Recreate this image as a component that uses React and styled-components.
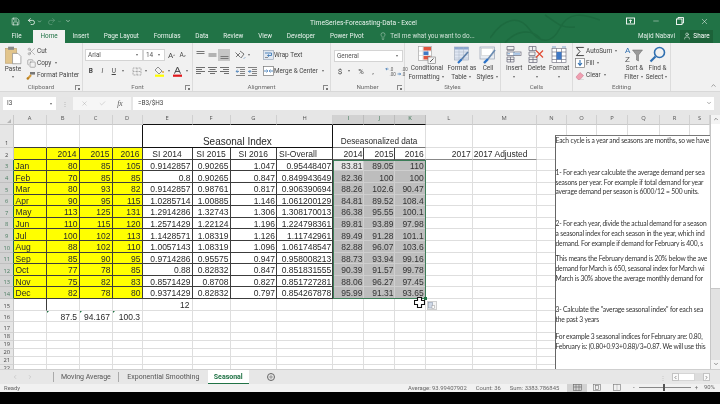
import React from "react";
import styled, { createGlobalStyle } from "styled-components";
import { Save, Undo2, Redo2, Lightbulb, User, X, Minus, Scissors, Copy, Search, Check, ChevronUp, ChevronDown, ChevronLeft, ChevronRight, Plus } from "lucide-react";

const Global = createGlobalStyle`
  html, body { margin: 0; padding: 0; background: #000; }
  * { box-sizing: border-box; }
`;

const Frame = styled.div`
  width: 720px; height: 404px; overflow: hidden; background: #000;
  display: flex; flex-direction: column;
  font-family: Roboto, "Open Sans", sans-serif;
  filter: blur(0.4px);
`;
const BlackBar = styled.div`height: ${p => p.$h}px; flex: none; background: #000;`;

const TitleRow = styled.div`
  height: 17px; flex: none; background: #217346; color: #fff; position: relative;
  display: flex; align-items: center; padding-left: 10px;
`;
const Qat = styled.div`display: flex; align-items: center; width: 280px; gap: 0;`;
const QatBtn = styled.span`
  display: inline-flex; align-items: center; justify-content: center;
  width: ${p => p.$w || 10}px; margin-right: ${p => p.$mr || 0}px; opacity: ${p => p.$dim ? .35 : 1};
`;
const WinTitle = styled.div`
  width: 145px; padding-left: 20px; font-size: 6.7px; white-space: nowrap; color: #e8f2ec; margin-top: 3px;
`;
const WinBtns = styled.div`display: flex; align-items: center; margin-left: auto; padding-right: 3px;`;
const WinBtn = styled.span`
  width: 24.6px; display: inline-flex; justify-content: center; align-items: center;
`;
const Swirl = styled.svg`position: absolute; left: 490px; top: 0; pointer-events: none;`;

const TabRow = styled.div`
  height: 13.4px; flex: none; background: #217346; display: flex; align-items: stretch; color: #fff;
  font-size: 6.4px;
`;
const Tab = styled.div`
  padding: 0 ${p => p.$px ?? 7.4}px; display: flex; align-items: center; white-space: nowrap;
  background: ${p => p.$active ? "#f1f1f1" : "transparent"};
  color: ${p => p.$active ? "#217346" : "#e9f3ed"};
`;
const TellMe = styled.div`display: flex; align-items: center; gap: 3px; padding-left: 8px; color: #cfe2d7; white-space: nowrap;`;
const UserName = styled.div`margin-left: auto; display: flex; align-items: center; white-space: nowrap; color: #e2efe8;`;
const ShareBtn = styled.div`
  background: #1c6239; margin: 0 7px 0 5px; width: 33px; display: flex; align-items: center; justify-content: center; gap: 2px;
`;

const Ribbon = styled.div`
  height: 48.8px; flex: none; background: #f1f1f1; display: flex; color: #454545; font-size: 6.4px;
  border-bottom: 1px solid #d8d8d8; position: relative;
`;
const Group = styled.div`
  width: ${p => p.$w}px; flex: none; display: flex; flex-direction: column;
  border-right: 1px solid #dcdcdc; position: relative;
`;
const GroupBody = styled.div`
  height: 38px; display: flex; padding: ${p => p.$pt ?? 2}px 0 0 ${p => p.$pl ?? 0}px;
  flex-direction: ${p => p.$col ? "column" : "row"}; gap: ${p => p.$gap || 0}px;
`;
const GroupLabel = styled.div`
  flex: 1; display: flex; align-items: center; justify-content: center; color: #6a6a6a; font-size: 6.2px; position: relative; padding-top: 1.5px;
`;
const Launcher = styled.span`
  position: absolute; right: 2px; top: 3.5px; width: 5px; height: 5px;
  border-left: 1px solid #888; border-bottom: 0; border-top: 1px solid #888; 
  &::after { content: ""; position: absolute; right: 0; bottom: 0; width: 2px; height: 2px; background: #777; }
`;
const PasteBtn = styled.div`
  width: 26px; display: flex; flex-direction: column; align-items: center; padding-top: 1px; color: #444; flex: none;
`;
const SmallCol = styled.div`display: flex; flex-direction: column; width: ${p => p.$w || 56}px; flex: none;`;
const SmallRow = styled.div`
  height: 12px; display: flex; align-items: center; gap: 1px; white-space: nowrap;
`;
const SmallIcon = styled.span`width: ${p => p.$w || 10}px; display: inline-flex; justify-content: center; flex: none; align-items: center;`;
const Row = styled.div`display: flex; align-items: center; height: 12px;`;
const Combo = styled.div`
  width: ${p => p.$w}px; height: 12px; background: #fff; border: 1px solid #d4d4d4; flex: none;
  display: flex; align-items: center; justify-content: space-between; padding: 0 2px; color: #555; font-size: 6.4px;
`;
const Caret = styled.span`
  display: inline-block; width: ${p => p.$w || 6}px; flex: none; text-align: center;
  &::before { content: ""; display: inline-block; vertical-align: middle; border: 1.5px solid transparent; border-top: 2px solid #666; border-bottom: 0; }
`;
const Cmd = styled.span`
  width: ${p => p.$w || 12}px; height: 12px; flex: none; display: inline-flex; align-items: center; justify-content: center;
  font-size: ${p => p.$fs || 7}px; color: #444; font-weight: ${p => p.$b ? 700 : 400}; font-style: ${p => p.$i ? "italic" : "normal"};
  text-decoration: ${p => p.$u ? "underline" : "none"};
  background: ${p => p.$on ? "#c6c6c6" : "transparent"};
`;
const Spacer = styled.span`width: ${p => p.$w}px; flex: none; display: inline-block;`;
const BigBtn = styled.div`
  width: ${p => p.$w}px; flex: none; display: flex; flex-direction: column; align-items: center; white-space: nowrap;
`;
const BigIcon = styled.div`height: 20px; display: flex; align-items: center; justify-content: center;`;
const BigLine = styled.div`height: 8.3px; line-height: 8.3px; display: flex; align-items: center;`;
const Collapse = styled.span`position: absolute; right: 3px; bottom: 2px; color: #555; display: flex;`;

const FormulaBar = styled.div`
  height: 23px; flex: none; background: #e6e6e6; display: flex; align-items: center; padding: 0 6px 0 3px; font-size: 6.4px; color: #444;
`;
const NameBox = styled.div`
  width: 53px; height: 13px; background: #fff; display: flex; align-items: center; justify-content: space-between; padding: 0 2px 0 4px; flex: none;
`;
const Grip = styled.span`width: 17px; text-align: center; color: #aaa; font-size: 6px; flex: none;`;
const FxBox = styled.div`
  width: 58px; height: 13px; background: #f6f6f6; display: flex; align-items: center; justify-content: space-around; padding: 0 3px; margin-right: 2px; flex: none; color: #999;
`;
const Fx = styled.span`font-family: "Liberation Serif", serif; font-style: italic; color: #555; font-size: 7.5px;`;
const FormulaInput = styled.div`
  flex: 1; height: 13px; background: #fff; display: flex; align-items: center; justify-content: space-between; padding: 0 2px 0 5px;
`;

const SheetWrap = styled.div`height: 254px; flex: none; display: flex; position: relative; background: #fff; overflow: hidden;`;
const Sheet = styled.div`
  width: 710px; flex: none; display: grid; overflow: hidden;
  grid-template-columns: 13.5px 33px 33px 33px 30px 50px 38px 46.5px 56.3px 31.2px 31px 30.2px 47px 64px 30.3px 30px 31px 32px 30px 20px;
  grid-template-rows: 9.7px 23px 12.3px repeat(12, 11.6px) 11.7px 11.6px 10.7px repeat(5, 8px);
  font-family: "Liberation Sans", Arial, sans-serif; font-size: 8.5px; color: #2a2a2a;
`;
const Corner = styled.div`background: #e6e6e6; border-right: 1px solid #c8c8c8; border-bottom: 1px solid #c8c8c8; position: relative;
  &::after { content: ""; position: absolute; right: 2px; bottom: 1px; border: 2px solid transparent; border-right-color: #b5b5b5; border-bottom-color: #b5b5b5; }
`;
const ColHead = styled.div`
  background: ${p => p.$sel ? "#d2d2d2" : "#e6e6e6"};
  border-right: 1px solid ${p => p.$sel ? "#bcbcbc" : "#d0d0d0"};
  border-bottom: 1px solid ${p => p.$line};
  font-family: "Open Sans", sans-serif; font-size: 5.8px; color: ${p => p.$sel ? "#2f6e4a" : "#555"};
  display: flex; align-items: center; justify-content: center; line-height: 1;
`;
const RowHead = styled.div`
  background: ${p => p.$sel ? "#d2d2d2" : "#e6e6e6"};
  border-right: 1px solid ${p => p.$sel ? "#217346" : "#c8c8c8"};
  border-bottom: 1px solid ${p => p.$sel ? "#bfbfbf" : "#d2d2d2"};
  font-family: "Open Sans", sans-serif; font-size: 5.8px; color: ${p => p.$sel ? "#4c7d62" : "#444"};
  display: flex; align-items: flex-end; justify-content: center; line-height: 8px; padding-left: 1px;
`;
const Cell = styled.div`
  grid-column: span ${p => p.$span || 1};
  background: ${p => p.$bg || "#fff"};
  border-right: 1px solid ${p => p.$r || "#dedede"};
  border-bottom: 1px solid ${p => p.$b || "#dedede"};
  display: flex; align-items: flex-end; white-space: nowrap; line-height: 8.5px;
  justify-content: ${p => p.$j || "flex-end"};
  padding: 0 ${p => p.$pr ?? 1}px 0 ${p => p.$pl ?? 1}px;
  font-size: ${p => p.$fs || 8.5}px; color: ${p => p.$c || "#2a2a2a"};
  position: relative; min-width: 0;
`;
const Tick = styled.span`
  position: absolute; left: 0; top: 0; border: 1.3px solid transparent; border-left-color: #217346; border-top-color: #217346;
`;
const Selection = styled.div`
  position: absolute; left: 333px; top: 45px; width: 93px; height: 139.4px; border: 1px solid #3c7d58; pointer-events: none;
  &::after { content: ""; position: absolute; right: -2px; bottom: -2px; width: 3px; height: 3px; background: #217346; }
`;
const CursorMark = styled.svg`position: absolute; left: 414px; top: 182px;`;
const PasteOpts = styled.div`
  position: absolute; left: 426.5px; top: 186px; width: 10px; height: 9.5px; background: #f4f4f4; border: 1px solid #cfcfcf;
  display: flex; align-items: center; justify-content: center;
`;
const TextBox = styled.div`
  position: absolute; left: 554.5px; top: 20px; right: 10px; bottom: 0; background: #fff;
  border-left: 1px solid #666; border-top: 1px solid #777; overflow: hidden;
  font-family: Lato, "Open Sans", sans-serif; font-size: 6.7px; letter-spacing: -0.18px; color: #333; line-height: 9.7px; padding-top: 0.5px;
`;
const Para = styled.div`margin-top: ${p => p.$mt || 0}px;`;
const Line = styled.div`white-space: nowrap;`;
const VScroll = styled.div`
  width: 10px; flex: none; background: #e2e2e2; border-left: 1px solid #c6c6c6; display: flex; flex-direction: column;
`;
const VArrow = styled.div`height: 9px; flex: none; display: flex; align-items: center; justify-content: center; background: #f4f4f4; color: #555;`;
const VThumb = styled.div`height: 165px; background: #fff; border-bottom: 1px solid #c8c8c8; flex: none;`;
const VTrack = styled.div`flex: 1;`;

const SheetTabs = styled.div`
  height: 15.5px; flex: none; background: #e7e7e7; display: flex; align-items: stretch; font-size: 7px; color: #555;
  border-top: 1px solid #cfcfcf;
`;
const NavArrows = styled.div`width: 53px; display: flex; align-items: center; padding-left: 12px; gap: 9px; color: #b2b2b2; flex: none;`;
const STab = styled.div`
  display: flex; align-items: center; white-space: nowrap; padding: 0 ${p => p.$px || 8}px;
  ${p => p.$active ? `background:#fff; color:#217346; font-weight:700; border-bottom:1.5px solid #217346;` : `position:relative;`}
  ${p => p.$sep ? `border-left: 1px solid #aaa; margin: 2.5px 0;` : ""}
`;
const AddSheet = styled.div`
  width: 8px; height: 8px; border-radius: 50%; border: 1px solid #666; margin: 3px 0 0 18px; display: flex; align-items: center; justify-content: center;
`;
const HScroll = styled.div`margin-left: auto; display: flex; align-items: center; padding-right: 10.5px; color: #555;`;
const HDots = styled.span`color: #bbb; margin-right: 6px; font-size: 6px;`;
const HBtn = styled.span`width: 7px; height: 8px; background: #fafafa; border: 1px solid #c3c3c3; display: inline-flex; align-items: center; justify-content: center;`;
const HThumb = styled.span`width: 16px; height: 8px; background: #fff; border: 1px solid #d5d5d5; border-left: 0;`;
const HTrack = styled.span`width: 8px; height: 8px; background: #dcdcdc;`;

const StatusBar = styled.div`
  height: 7.5px; flex: none; background: #f1f1f1; overflow: hidden; display: flex; align-items: flex-start; font-size: 5.9px; color: #666; line-height: 9px;
  padding-left: 4px;
`;
const StatusReady = styled.span`width: 15px; flex: none;`;
const StatusStats = styled.div`margin-left: 389px; display: flex; gap: 9px; white-space: nowrap; width: 155px; flex: none;`;
const ViewBtn = styled.span`width: 20px; height: 8px; flex: none; display: inline-flex; justify-content: center; background: ${p => p.$on ? "#d2d2d2" : "transparent"};`;
const Zoomer = styled.div`display: flex; align-items: center; height: 7px; margin-left: 6px; gap: 3px; flex: none;`;
const ZoomTrack = styled.span`width: 52px; height: 1px; background: #888; position: relative; margin: 0 1px; display: block;
  &::after { content: ""; position: absolute; left: 24px; top: -3px; width: 2px; height: 7px; background: #555; }
`;
const ZoomValue = styled.span`margin-left: 3px;`;
const NoWrap = styled.span`white-space: nowrap;`;
const Sup = styled.sup`font-size: 4px;`;

/* ---------- drawings ---------- */
const Lines = ({ kind, y = 2 }) => {
  const w = { l: [9, 6, 9, 5], c: [9, 6, 9, 5], r: [9, 6, 9, 5] }[kind];
  return (
    <svg width="11" height="9" viewBox="0 0 11 9">
      {w.map((v, i) => {
        const x = kind === "l" ? 1 : kind === "r" ? 10 - v : (11 - v) / 2;
        return <rect key={i} x={x} y={y - 2 + i * 2} width={v} height="1" fill="#6f6f6f" />;
      })}
    </svg>
  );
};
const VLines = ({ pos }) => {
  const y0 = pos === "t" ? 0 : pos === "m" ? 2.5 : 5;
  return (
    <svg width="11" height="9" viewBox="0 0 11 9">
      {[0, 2].map(i => <rect key={i} x="1.5" y={y0 + i} width="8" height="1" fill="#777" />)}
    </svg>
  );
};
const PasteIcon = () => (
  <svg width="17" height="19" viewBox="0 0 17 19">
    <rect x="0.5" y="2.5" width="11" height="15" fill="#e2c58c" stroke="#b99a62" strokeWidth=".6" />
    <rect x="3" y="0.7" width="6" height="3.2" fill="#8a8a8a" />
    <path d="M7.5 7.5h5.5l3 3v7.5H7.5z" fill="#fff" stroke="#8a8a8a" strokeWidth=".7" />
  </svg>
);
const PainterIcon = () => (
  <svg width="10" height="9" viewBox="0 0 10 9">
    <rect x="4" y="1" width="5" height="2.6" fill="#777" />
    <path d="M5 4L2 7.5" stroke="#d39a3a" strokeWidth="2" />
    <circle cx="1.8" cy="7.5" r="1.2" fill="#b77d1c" />
  </svg>
);
const BorderIcon = () => (
  <svg width="10" height="9" viewBox="0 0 10 9" fill="none" stroke="#9a9a9a" strokeWidth=".8" strokeDasharray="1 .5">
    <rect x="1" y="1" width="8" height="7" /><path d="M5 1v7M1 4.5h8" />
  </svg>
);
const BucketIcon = () => (
  <svg width="11" height="11" viewBox="0 0 11 11">
    <path d="M4 1l4 4-3 3-4-4z" fill="#f3f3f3" stroke="#666" strokeWidth=".7" />
    <circle cx="9" cy="6" r="1" fill="#e9a63a" />
    <rect x="1" y="8.6" width="9" height="2.2" fill="#ffff00" />
  </svg>
);
const FontColorIcon = () => (
  <svg width="11" height="11" viewBox="0 0 11 11">
    <path d="M2.5 7.6L5.5 1l3 6.6M3.8 5.4h3.4" fill="none" stroke="#444" strokeWidth="1" />
    <rect x="1" y="8.6" width="9" height="2.2" fill="#e0181c" />
  </svg>
);
const OrientIcon = () => (
  <svg width="12" height="10" viewBox="0 0 12 10" fill="none" stroke="#666" strokeWidth=".9">
    <path d="M1.5 2.5l5 5M2 7l4-4M6 1l4 3-3 4" /><path d="M10 8.5l1-1" stroke="#2f6fb0" />
  </svg>
);
const WrapIcon = () => (
  <svg width="11" height="10" viewBox="0 0 11 10">
    <rect x=".5" y=".5" width="10" height="9" fill="#dfe7f1" stroke="#8a9bb0" strokeWidth=".6" />
    <path d="M2 3h6.5v2.5H5M6 4.5L4.5 5.5 6 6.7" fill="none" stroke="#2f6fb0" strokeWidth=".8" />
    <rect x="2" y="7.2" width="3" height=".8" fill="#777" />
  </svg>
);
const MergeIcon = () => (
  <svg width="11" height="10" viewBox="0 0 11 10">
    <rect x=".5" y=".5" width="10" height="9" fill="#fff" stroke="#777" strokeWidth=".7" />
    <path d="M1 5h3M10 5H7" stroke="#2f6fb0" strokeWidth=".8" /><path d="M3.5 3.5L5 5 3.5 6.500M7.500 3.500L6 5l1.500 1.500" fill="none" stroke="#2f6fb0" strokeWidth=".7" />
  </svg>
);
const IndentIcon = ({ flip }) => (
  <svg width="11" height="9" viewBox="0 0 11 9">
    {[0, 2, 4, 6, 8].map(y => <rect key={y} x={y > 1 && y < 7 ? 5 : 1} y={y} width={y > 1 && y < 7 ? 5 : 9} height=".9" fill="#777" />)}
    <path d={flip ? "M1 4.400h2.600M2.500 3l1.400 1.400L2.500 5.800" : "M4 4.400H1.400M2.500 3L1.100 4.400 2.500 5.800"} fill="none" stroke="#2f6fb0" strokeWidth=".8" />
  </svg>
);
const DecIcon = ({ top, bottom, arrowRight }) => (
  <svg width="12" height="11" viewBox="0 0 12 11">
    <text x="4.500" y="4.500" fontSize="4.500" fill="#555" fontFamily="Liberation Sans">{top}</text>
    <text x="4.500" y="10" fontSize="4.500" fill="#555" fontFamily="Liberation Sans">{bottom}</text>
    <path d={arrowRight ? "M0.500 8h3M2.500 6.800l1.200 1.200-1.200 1.200" : "M3.500 3H.8M2 1.800L.8 3 2 4.200"} fill="none" stroke="#2f6fb0" strokeWidth=".7" />
  </svg>
);
const CondIcon = () => (
  <svg width="18" height="18" viewBox="0 0 18 18">
    <rect x=".5" y=".5" width="13" height="14" fill="#fff" stroke="#9a9a9a" strokeWidth=".6" />
    <path d="M5 .5v14M9.500 .5v14M.5 5h13M.5 9.500h13" stroke="#bdbdbd" strokeWidth=".5" />
    <rect x="5.500" y="1" width="7.500" height="3.500" fill="#e0543f" />
    <rect x="5.500" y="5.500" width="5" height="3.500" fill="#3f79c6" />
    <rect x="5.500" y="10" width="7" height="3.500" fill="#e0543f" />
    <rect x="10" y="11" width="7.500" height="6.500" fill="#f4f4f4" stroke="#777" strokeWidth=".6" />
    <path d="M12 16l3.500-3.500" stroke="#555" />
  </svg>
);
const TableIcon = () => (
  <svg width="18" height="18" viewBox="0 0 18 18">
    <rect x="1.500" y="1" width="14" height="13" fill="#dfe6f2" stroke="#9aa5b5" strokeWidth=".6" />
    <rect x="1.500" y="1" width="14" height="2.500" fill="#8ea7cf" />
    <path d="M6 1v13M10.500 1v13M1.500 6h14M1.500 9h14M1.500 12h14" stroke="#a9b4c6" strokeWidth=".5" />
    <path d="M8 14l7-8" stroke="#5b7ea8" strokeWidth="1.600" /><path d="M5 17l3.500-3.500" stroke="#2c72c7" strokeWidth="2.200" />
  </svg>
);
const StylesIcon = () => (
  <svg width="18" height="18" viewBox="0 0 18 18">
    <rect x="1" y="1" width="14.500" height="12" fill="#e9edf3" stroke="#98a3b4" strokeWidth=".7" />
    <rect x="2.500" y="2.500" width="11.500" height="7" fill="#fff" stroke="#bbb" strokeWidth=".4" />
    <path d="M9 13l7-9" stroke="#6a8bb2" strokeWidth="1.700" /><path d="M5 17l4-4" stroke="#2c72c7" strokeWidth="2.400" />
  </svg>
);
const InsertIcon = () => (
  <svg width="16" height="17" viewBox="0 0 16 17" fill="none" stroke="#667" strokeWidth=".7">
    <path d="M1 .5h7v3.500H1zM1 4h7M1 11h7v5H1zM4.500 11v5M1 13.500h7" />
    <rect x="1" y="6" width="14" height="3.600" fill="#fff" />
    <path d="M8 6v3.600M4 7.800H1.500" stroke="#2f6fb0" />
    <rect x="9" y="6.700" width="5" height="2.200" fill="#a7c4e6" stroke="none" />
  </svg>
);
const DeleteIcon = () => (
  <svg width="17" height="17" viewBox="0 0 17 17" fill="none" stroke="#667" strokeWidth=".7">
    <path d="M1 .5h7v4H1zM4.500 .5v4M1 11h8v5.500H1zM5 11v5.500M1 13.500h8M1 6h6v3.500H1z" />
    <path d="M8 4.500l7 7M15 4.500l-7 7" stroke="#e04b33" strokeWidth="1.200" />
  </svg>
);
const FormatIcon = () => (
  <svg width="16" height="17" viewBox="0 0 16 17" fill="none" stroke="#667" strokeWidth=".6">
    <rect x="1" y="2.500" width="14" height="14" fill="#fff" />
    <path d="M1 6h14M1 10h14M1 13.500h14M5.500 2.500v14M10.500 2.500v14" />
    <rect x="5.500" y="6" width="5" height="7.500" fill="#3f79c6" stroke="none" />
    <path d="M1 1h4M11 1h4" stroke="#2f6fb0" />
  </svg>
);
const SigmaIcon = () => (
  <svg width="11" height="11" viewBox="0 0 11 11"><path d="M9.500 1.500V1h-8l4 4.500-4 4.500h8V9.400" fill="none" stroke="#444" strokeWidth="1.100" /></svg>
);
const FillIcon = () => (
  <svg width="10" height="10" viewBox="0 0 10 10">
    <rect x=".5" y=".5" width="9" height="9" fill="#fff" stroke="#777" strokeWidth=".7" />
    <path d="M5 2v5M3 5l2 2.300L7 5" fill="none" stroke="#2f6fb0" strokeWidth="1.100" />
  </svg>
);
const EraserIcon = () => (
  <svg width="10" height="9" viewBox="0 0 10 9">
    <path d="M1 6l4-4.500 3.500 3L5 8.500H3z" fill="#ef9fb0" stroke="#c8708a" strokeWidth=".5" />
    <path d="M4 8.700h5" stroke="#bbb" strokeWidth=".5" />
  </svg>
);
const SortIcon = () => (
  <svg width="19" height="18" viewBox="0 0 19 18">
    <text x="0" y="7" fontSize="8" fill="#2f6fb0" fontFamily="Liberation Sans">A</text>
    <text x="0" y="16" fontSize="8" fill="#555" fontFamily="Liberation Sans">Z</text>
    <path d="M7.500 4h10l-4 5v6l-2-1V9z" fill="#9a9a9a" stroke="#666" strokeWidth=".5" />
  </svg>
);
const CopyMini = () => <Copy size={9} color="#777" strokeWidth={1.4} />;

/* ---------- sheet data ---------- */
const cols = "ABCDEFGHIJKLMNOPQRS".split("");
const months = ["Jan","Feb","Mar","Apr","May","Jun","Jul","Aug","Sep","Oct","Nov","Dec"];
const demand = [[80,85,105],[70,85,85],[80,93,82],[90,95,115],[113,125,131],[110,115,120],[100,102,113],[88,102,110],[85,90,95],[77,78,85],[75,82,83],[82,78,80]];
const si = [
  ["0.9142857","0.90265","1.047","0.95448407"],["0.8","0.90265","0.847","0.849943649"],["0.9142857","0.98761","0.817","0.906390694"],
  ["1.0285714","1.00885","1.146","1.061200129"],["1.2914286","1.32743","1.306","1.308170013"],["1.2571429","1.22124","1.196","1.224798361"],
  ["1.1428571","1.08319","1.126","1.11742961"],["1.0057143","1.08319","1.096","1.061748547"],["0.9714286","0.95575","0.947","0.958008213"],
  ["0.88","0.82832","0.847","0.851831555"],["0.8571429","0.8708","0.827","0.851727281"],["0.9371429","0.82832","0.797","0.854267878"],
];
const des = [
  ["83.81","89.05","110"],["82.36","100","100"],["88.26","102.6","90.47"],["84.81","89.52","108.4"],["86.38","95.55","100.1"],["89.81","93.89","97.98"],
  ["89.49","91.28","101.1"],["82.88","96.07","103.6"],["88.73","93.94","99.16"],["90.39","91.57","99.78"],["88.06","96.27","97.45"],["95.99","91.31","93.65"],
];
const DARK = "#3c3c3c";
const YEL = "#ffff00";
const SEL = "#bdbdbd";

function cellsForRow(r) {
  const out = [];
  const push = (c, props = {}, text = "") => out.push(<Cell key={r + c} {...props}>{text}</Cell>);
  if (r === 1) {
    ["A","B","C"].forEach(c => push(c, { $b: DARK, $r: "#e2e2e2" }));
    push("D", { $b: DARK, $r: "#111" });
    push("E", { $span: 4, $fs: 10, $j: "center", $r: "#111", $b: "#111" }, "Seasonal Index");
    push("I", { $span: 3, $fs: 8.2, $j: "center", $b: "#777" }, "Deseasonalized data");
    cols.slice(11).forEach(c => push(c));
  } else if (r === 2) {
    push("A", { $bg: YEL, $r: DARK, $b: DARK });
    ["2014","2015","2016"].forEach((t, i) => push("BCD"[i], { $bg: YEL, $r: DARK, $b: DARK, $pr: 2 }, t));
    ["SI 2014","SI 2015","SI 2016"].forEach((t, i) => push("EFG"[i], { $j: "center", $r: DARK, $b: DARK }, t));
    push("H", { $j: "flex-start", $r: DARK, $b: DARK, $pl: 2 }, "SI-Overall");
    ["2014","2015","2016"].forEach((t, i) => push("IJK"[i], { $r: i < 2 ? DARK : "#dedede", $b: "#666" }, t));
    push("L", { $b: "#888" }, "2017");
    push("M", { $j: "flex-start", $b: "#888" }, "2017 Adjusted");
    cols.slice(13).forEach(c => push(c));
  } else if (r >= 3 && r <= 14) {
    const i = r - 3;
    push("A", { $bg: YEL, $r: DARK, $b: DARK, $j: "flex-start", $pl: 2 }, months[i]);
    demand[i].forEach((v, k) => push("BCD"[k], { $bg: YEL, $r: DARK, $b: DARK }, v));
    si[i].forEach((v, k) => push("EFGH"[k], { $r: DARK, $b: DARK }, v));
    des[i].forEach((v, k) => push("IJK"[k], {
      $bg: r === 3 && k === 0 ? "#e6e6e6" : SEL, $r: "#cfcfcf", $b: "#cfcfcf", $c: "#333",
    }, v));
    cols.slice(11).forEach(c => push(c));
  } else if (r === 15) {
    push("A", { $r: DARK });
    cols.slice(1).forEach(c => c === "E" ? push(c, { $pr: 2 }, "12") : push(c));
  } else if (r === 16) {
    push("A");
    const vals = { B: "87.5", C: "94.167", D: "100.3" };
    cols.slice(1).forEach(c => vals[c]
      ? out.push(<Cell key={r + c} $pr={1.5}><Tick />{vals[c]}</Cell>)
      : push(c));
  } else {
    cols.forEach(c => push(c));
  }
  return out;
}

const rows = Array.from({ length: 22 }, (_, i) => i + 1);

export default function App() {
  return (
    <Frame>
      <Global />
      <BlackBar $h={12.7} />
      <TitleRow>
        <Qat>
          <QatBtn $mr={6}><Save size={9} strokeWidth={1.5} /></QatBtn>
          <QatBtn $mr={0}><Undo2 size={9} strokeWidth={2} /></QatBtn>
          <QatBtn $w={6} $mr={4}><ChevronDown size={5} strokeWidth={2} /></QatBtn>
          <QatBtn $dim $mr={0}><Redo2 size={9} strokeWidth={1.6} /></QatBtn>
          <QatBtn $dim $w={6} $mr={2}><ChevronDown size={5} strokeWidth={2} /></QatBtn>
          <QatBtn $w={8}><ChevronDown size={6} strokeWidth={2} /></QatBtn>
        </Qat>
        <WinTitle>TimeSeries-Forecasting-Data - Excel</WinTitle>
        <Swirl width="110" height="30" viewBox="0 0 110 30" fill="none" stroke="#1d6a3f" strokeWidth="1.500">
          <path d="M0 25c15-22 30-22 40-8s22 14 30-2 22-15 40-8M15 30c10-12 25-15 35-5M55 2c10 6 15 14 30 12" />
        </Swirl>
        <WinBtns>
          <WinBtn>
            <svg width="9" height="8" viewBox="0 0 9 8" fill="none" stroke="#fff" strokeWidth=".9"><rect x=".5" y="1" width="8" height="6" /><path d="M4.500 6V3M3.200 4l1.300-1.300L5.800 4" /></svg>
          </WinBtn>
          <WinBtn><Minus size={8} strokeWidth={1.3} /></WinBtn>
          <WinBtn>
            <svg width="8" height="8" viewBox="0 0 8 8" fill="none" stroke="#fff" strokeWidth=".9"><rect x=".5" y="2" width="5.500" height="5.500" /><path d="M2 2V.5h5.500V6H6" /></svg>
          </WinBtn>
          <WinBtn><X size={9} strokeWidth={1.3} /></WinBtn>
        </WinBtns>
      </TitleRow>
      <TabRow>
        <Tab $px={11.5}>File</Tab>
        <Tab $active $px={7.5}>Home</Tab>
        <Tab>Insert</Tab>
        <Tab>Page Layout</Tab>
        <Tab>Formulas</Tab>
        <Tab>Data</Tab>
        <Tab>Review</Tab>
        <Tab>View</Tab>
        <Tab>Developer</Tab>
        <Tab>Power Pivot</Tab>
        <TellMe><Lightbulb size={8} strokeWidth={1.4} />Tell me what you want to do...</TellMe>
        <UserName>Majid Nabavi</UserName>
        <ShareBtn><User size={8} strokeWidth={1.6} />Share</ShareBtn>
      </TabRow>
      <Ribbon>
        <Group $w={83}>
          <GroupBody $pl={0}>
            <PasteBtn>
              <PasteIcon />
              <BigLine>Paste</BigLine>
              <Caret />
            </PasteBtn>
            <SmallCol>
              <SmallRow><SmallIcon><Scissors size={9} color="#777" strokeWidth={1.3} /></SmallIcon>Cut</SmallRow>
              <SmallRow><SmallIcon><CopyMini /></SmallIcon>Copy<Caret $w={8} /></SmallRow>
              <SmallRow><SmallIcon><PainterIcon /></SmallIcon>Format Painter</SmallRow>
            </SmallCol>
          </GroupBody>
          <GroupLabel>Clipboard<Launcher /></GroupLabel>
        </Group>
        <Group $w={110}>
          <GroupBody $col $pt={6} $pl={2} $gap={4}>
            <Row>
              <Combo $w={58}>Arial<Caret /></Combo>
              <Combo $w={22}>14<Caret /></Combo>
              <Spacer $w={1} />
              <Cmd $w={11} $fs={8}>A<Sup>^</Sup></Cmd>
              <Cmd $w={11} $fs={6.5}>A<Sup>v</Sup></Cmd>
            </Row>
            <Row>
              <Cmd $w={11.5} $b $fs={6.5}>B</Cmd>
              <Cmd $w={11.5} $i $fs={6.5}>I</Cmd>
              <Cmd $w={11.5} $u $fs={6.5}>U</Cmd>
              <Caret />
              <Spacer $w={5} />
              <Cmd><BorderIcon /></Cmd>
              <Caret />
              <Spacer $w={5} />
              <Cmd><BucketIcon /></Cmd>
              <Caret />
              <Cmd><FontColorIcon /></Cmd>
              <Caret />
            </Row>
          </GroupBody>
          <GroupLabel>Font<Launcher /></GroupLabel>
        </Group>
        <Group $w={138}>
          <GroupBody $col $pt={6} $pl={1} $gap={4}>
            <Row>
              <Cmd><VLines pos="t" /></Cmd>
              <Cmd><VLines pos="m" /></Cmd>
              <Cmd $on><VLines pos="b" /></Cmd>
              <Spacer $w={4} />
              <Cmd><OrientIcon /></Cmd>
              <Caret />
              <Spacer $w={10} />
              <Cmd><WrapIcon /></Cmd>
              <span>Wrap Text</span>
            </Row>
            <Row>
              <Cmd><Lines kind="l" /></Cmd>
              <Cmd><Lines kind="c" /></Cmd>
              <Cmd><Lines kind="r" /></Cmd>
              <Spacer $w={4} />
              <Cmd><IndentIcon /></Cmd>
              <Cmd><IndentIcon flip /></Cmd>
              <Spacer $w={4} />
              <Cmd><MergeIcon /></Cmd>
              <NoWrap>Merge &amp; Center</NoWrap>
              <Caret $w={10} />
            </Row>
          </GroupBody>
          <GroupLabel>Alignment<Launcher /></GroupLabel>
        </Group>
        <Group $w={74}>
          <GroupBody $col $pt={6.5} $pl={3} $gap={3.5}>
            <Row><Combo $w={69}>General<Caret /></Combo></Row>
            <Row>
              <Cmd $fs={8}>$</Cmd>
              <Caret />
              <Spacer $w={3} />
              <Cmd $fs={7.5}>%</Cmd>
              <Cmd $fs={8}>,</Cmd>
              <Spacer $w={6} />
              <Cmd><DecIcon top=".0" bottom=".00" /></Cmd>
              <Cmd><DecIcon top=".00" bottom=".0" arrowRight /></Cmd>
            </Row>
          </GroupBody>
          <GroupLabel>Number<Launcher /></GroupLabel>
        </Group>
        <Group $w={96}>
          <GroupBody>
            <BigBtn $w={44}>
              <BigIcon><CondIcon /></BigIcon>
              <BigLine>Conditional</BigLine>
              <BigLine>Formatting<Caret /></BigLine>
            </BigBtn>
            <BigBtn $w={26}>
              <BigIcon><TableIcon /></BigIcon>
              <BigLine>Format as</BigLine>
              <BigLine>Table<Caret /></BigLine>
            </BigBtn>
            <BigBtn $w={26}>
              <BigIcon><StylesIcon /></BigIcon>
              <BigLine>Cell</BigLine>
              <BigLine>Styles<Caret /></BigLine>
            </BigBtn>
          </GroupBody>
          <GroupLabel>Styles</GroupLabel>
        </Group>
        <Group $w={72}>
          <GroupBody $pl={2}>
            <BigBtn $w={22.5}>
              <BigIcon><InsertIcon /></BigIcon>
              <BigLine>Insert</BigLine>
              <BigLine><Caret /></BigLine>
            </BigBtn>
            <BigBtn $w={22.5}>
              <BigIcon><DeleteIcon /></BigIcon>
              <BigLine>Delete</BigLine>
              <BigLine><Caret /></BigLine>
            </BigBtn>
            <BigBtn $w={22.5}>
              <BigIcon><FormatIcon /></BigIcon>
              <BigLine>Format</BigLine>
              <BigLine><Caret /></BigLine>
            </BigBtn>
          </GroupBody>
          <GroupLabel>Cells</GroupLabel>
        </Group>
        <Group $w={98}>
          <GroupBody $pl={2}>
            <SmallCol $w={48}>
              <SmallRow><SmallIcon><SigmaIcon /></SmallIcon>AutoSum<Caret /></SmallRow>
              <SmallRow><SmallIcon><FillIcon /></SmallIcon>Fill<Caret /></SmallRow>
              <SmallRow><SmallIcon><EraserIcon /></SmallIcon>Clear<Caret /></SmallRow>
            </SmallCol>
            <BigBtn $w={23}>
              <BigIcon><SortIcon /></BigIcon>
              <BigLine>Sort &amp;</BigLine>
              <BigLine>Filter<Caret /></BigLine>
            </BigBtn>
            <BigBtn $w={23}>
              <BigIcon>
                <svg width="17" height="17" viewBox="0 0 17 17" fill="none" stroke="#2f6fb0" strokeWidth="1.6"><circle cx="10.500" cy="6.500" r="5" /><path d="M6.500 10.500L1.500 15.500" strokeWidth="2.200" /></svg>
              </BigIcon>
              <BigLine>Find &amp;</BigLine>
              <BigLine>Select<Caret /></BigLine>
            </BigBtn>
          </GroupBody>
          <GroupLabel>Editing</GroupLabel>
        </Group>
        <Collapse><ChevronUp size={7} strokeWidth={1.8} /></Collapse>
      </Ribbon>
      <FormulaBar>
        <NameBox>I3<Caret /></NameBox>
        <Grip>⋮</Grip>
        <FxBox><X size={7} strokeWidth={1.2} /><Check size={7} strokeWidth={1.2} /><Fx>fx</Fx></FxBox>
        <FormulaInput>=B3/$H3<ChevronDown size={6} strokeWidth={1.8} /></FormulaInput>
      </FormulaBar>
      <SheetWrap>
        <Sheet>
          <Corner />
          {cols.map((c, i) => (
            <ColHead key={c} $sel={i >= 8 && i <= 10} $line={i >= 4 && i <= 10 ? "#111" : "#c8c8c8"}>{c}</ColHead>
          ))}
          {rows.map(r => (
            <React.Fragment key={r}>
              <RowHead $sel={r >= 3 && r <= 14}>{r}</RowHead>
              {cellsForRow(r)}
            </React.Fragment>
          ))}
        </Sheet>
        <VScroll>
          <VArrow><ChevronUp size={6} strokeWidth={2.5} /></VArrow>
          <VThumb />
          <VTrack />
          <VArrow><ChevronDown size={6} strokeWidth={2.5} /></VArrow>
        </VScroll>
        <Selection />
        <CursorMark width="11" height="11" viewBox="0 0 11 11">
          <path d="M3.500 .5h4v3h3v4h-3v3h-4v-3h-3v-4h3z" fill="#fff" stroke="#111" strokeWidth="1.100" />
        </CursorMark>
        <PasteOpts>
          <svg width="7" height="7" viewBox="0 0 7 7"><rect x=".5" y=".5" width="4" height="5.500" fill="#cfd8e6" stroke="#7e8ea6" strokeWidth=".5" /><rect x="4" y="3.500" width="2.500" height="3" fill="#fff" stroke="#999" strokeWidth=".5" /></svg>
        </PasteOpts>
        <TextBox>
          <Para $mt={0}><Line>Each cycle is a year and seasons are months, so we have</Line></Para>
          <Para $mt={22}>
            <Line>1- For each year calculate the average demand per sea</Line>
            <Line>seasons per year. For example if total demand for year</Line>
            <Line>average demand per season is 6000/12 = 500 units.</Line>
          </Para>
          <Para $mt={22}>
            <Line>2- For each year, divide the actual demand for a season</Line>
            <Line>a seasonal index for each season in the year, which ind</Line>
            <Line>demand. For example if demand for February is 400, s</Line>
          </Para>
          <Para $mt={6}>
            <Line>This means the February demand is 20% below the ave</Line>
            <Line>demand for March is 650, seasonal index for March wi</Line>
            <Line>March is 30% above the average monthly demand for</Line>
          </Para>
          <Para $mt={22}>
            <Line>3- Calculate the "average seasonal index" for each sea</Line>
            <Line>the past 3 years</Line>
          </Para>
          <Para $mt={7}>
            <Line>For example 3 seasonal indices for February are: 0.80,</Line>
            <Line>February is: (0.80+0.93+0.88)/3=0.87.  We will use this</Line>
          </Para>
        </TextBox>
      </SheetWrap>
      <SheetTabs>
        <NavArrows><ChevronLeft size={6} strokeWidth={2} /><ChevronRight size={6} strokeWidth={2} /></NavArrows>
        <STab $sep $px={7}>Moving Average</STab>
        <STab $sep $px={8.5}>Exponential Smoothing</STab>
        <STab $active $px={6}>Seasonal</STab>
        <AddSheet><Plus size={6} strokeWidth={2} color="#555" /></AddSheet>
        <HScroll>
          <HDots>⋮</HDots>
          <HBtn><ChevronLeft size={5} strokeWidth={3} /></HBtn>
          <HThumb />
          <HTrack />
          <HBtn><ChevronRight size={5} strokeWidth={3} /></HBtn>
        </HScroll>
      </SheetTabs>
      <StatusBar>
        <StatusReady>Ready</StatusReady>
        <StatusStats>
          <span>Average: 93.99407902</span>
          <span>Count: 36</span>
          <span>Sum: 3383.786845</span>
        </StatusStats>
        <Spacer $w={4} />
        <ViewBtn $on>
          <svg width="9" height="7" viewBox="0 0 9 7" fill="none" stroke="#666" strokeWidth=".6"><rect x=".5" y=".5" width="8" height="6" /><path d="M3 .5v6M6 .5v6M.5 3h8" /></svg>
        </ViewBtn>
        <ViewBtn>
          <svg width="8" height="7" viewBox="0 0 8 7" fill="none" stroke="#777" strokeWidth=".6"><rect x=".5" y=".5" width="7" height="6" /><rect x="2.500" y="1.500" width="3" height="4" /></svg>
        </ViewBtn>
        <ViewBtn>
          <svg width="8" height="7" viewBox="0 0 8 7" fill="none" stroke="#777" strokeWidth=".6"><rect x=".5" y=".5" width="7" height="6" /><path d="M4 .5v6" strokeDasharray="1 1" /></svg>
        </ViewBtn>
        <Zoomer>
          <span>-</span>
          <ZoomTrack />
          <span>+</span>
          <ZoomValue>90%</ZoomValue>
        </Zoomer>
      </StatusBar>
      <BlackBar $h={13} />
    </Frame>
  );
}
